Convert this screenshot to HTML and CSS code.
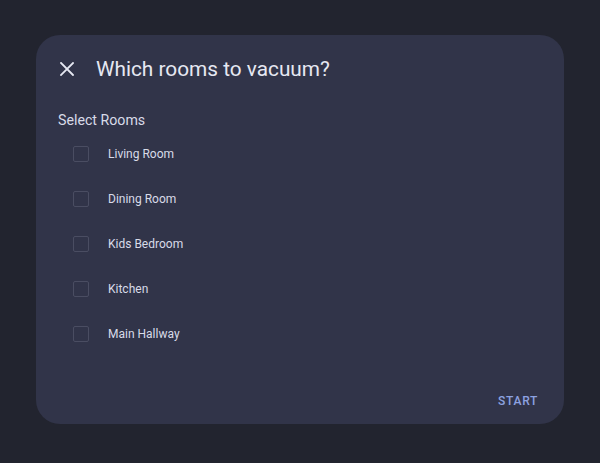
FILE: index.html
```html
<!DOCTYPE html>
<html lang="en">
<head>
  <meta charset="UTF-8">
  <title>Which rooms to vacuum?</title>
  <link rel="stylesheet" href="styles.css">
</head>
<body>

<!-- Room picker dialog -->
<div class="dialog">
  <header class="dialog-header">
    <button class="close-btn" title="Close">
      <svg width="14" height="14" viewBox="0 0 14 14">
        <path d="M1 1 L13 13 M13 1 L1 13" stroke="#e6e8f2" stroke-width="1.8" stroke-linecap="square" />
      </svg>
    </button>
    <h1>Which rooms to vacuum?</h1>
  </header>

  <div class="dialog-body">
    <div class="section-label">Select Rooms</div>
    <ul class="rooms">
      <li><span class="checkbox"></span>Living Room</li>
      <li><span class="checkbox"></span>Dining Room</li>
      <li><span class="checkbox"></span>Kids Bedroom</li>
      <li><span class="checkbox"></span>Kitchen</li>
      <li><span class="checkbox"></span>Main Hallway</li>
    </ul>
  </div>

  <footer class="dialog-footer">
    <button class="start-btn">START</button>
  </footer>
</div>

</body>
</html>
```

FILE: styles.css
```css
body {
  margin: 0;
  background: #22242f;
  font-family: Roboto, "Noto Sans", sans-serif;
  padding: 35px 36px;
}

.dialog {
  width: 528px;
  height: 389px;
  background: #313449;
  border-radius: 24px;
  display: flex;
  flex-direction: column;
  box-sizing: border-box;
}

.dialog-header {
  display: flex;
  align-items: center;
  padding: 22px 24px 0 24px;
  height: 24px;
}

.close-btn {
  background: none;
  border: none;
  padding: 0;
  width: 36px;
  height: 24px;
  display: flex;
  align-items: center;
  cursor: pointer;
}

.dialog-header h1 {
  margin: 0;
  font-size: 20.8px;
  font-weight: 400;
  color: #e6e8f2;
  line-height: 24px;
}

.dialog-body {
  flex: 1;
  padding: 29px 22px 0 22px;
}

.section-label {
  font-size: 14.2px;
  color: #d8dbe8;
  line-height: 20px;
  margin-bottom: 1px;
}

.rooms {
  list-style: none;
  margin: 0;
  padding: 0;
}

.rooms li {
  display: flex;
  align-items: center;
  height: 45px;
  font-size: 12px;
  color: #d8dbe8;
}

.checkbox {
  width: 14px;
  height: 14px;
  border: 1px solid #4a4d62;
  border-radius: 2px;
  margin: 0 19px 0 15px;
}

.dialog-footer {
  display: flex;
  justify-content: flex-end;
  padding: 0 26px 15px 0;
}

.start-btn {
  background: none;
  border: none;
  color: #8da2e0;
  font-family: Roboto, "Noto Sans", sans-serif;
  font-size: 12px;
  font-weight: 500;
  letter-spacing: 0.7px;
  padding: 0;
  height: 16px;
  cursor: pointer;
}
```
